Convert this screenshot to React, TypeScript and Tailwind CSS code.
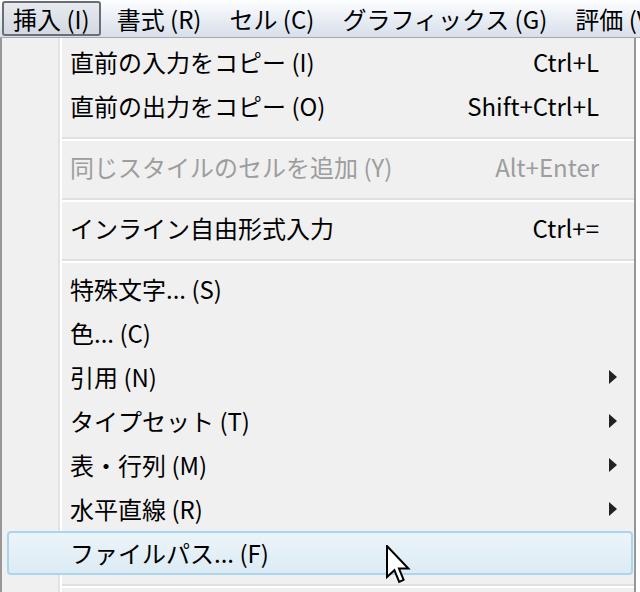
type Item =
  | { kind: "item"; label: string; shortcut?: string; sub?: boolean; disabled?: boolean; hot?: boolean }
  | { kind: "sep" };

const bar = ["挿入 (I)", "書式 (R)", "セル (C)", "グラフィックス (G)", "評価 (V)"];

const items: Item[] = [
  { kind: "item", label: "直前の入力をコピー (I)", shortcut: "Ctrl+L" },
  { kind: "item", label: "直前の出力をコピー (O)", shortcut: "Shift+Ctrl+L" },
  { kind: "sep" },
  { kind: "item", label: "同じスタイルのセルを追加 (Y)", shortcut: "Alt+Enter", disabled: true },
  { kind: "sep" },
  { kind: "item", label: "インライン自由形式入力", shortcut: "Ctrl+=" },
  { kind: "sep" },
  { kind: "item", label: "特殊文字... (S)" },
  { kind: "item", label: "色... (C)" },
  { kind: "item", label: "引用 (N)", sub: true },
  { kind: "item", label: "タイプセット (T)", sub: true },
  { kind: "item", label: "表・行列 (M)", sub: true },
  { kind: "item", label: "水平直線 (R)", sub: true },
  { kind: "item", label: "ファイルパス... (F)", hot: true },
  { kind: "sep" },
];

function Arrow() {
  return (
    <svg width="8" height="14" viewBox="0 0 8 14" className="ml-[10px]">
      <path d="M0 0 L8 7 L0 14 Z" fill="#222" />
    </svg>
  );
}

function Cursor() {
  return (
    <svg width="26" height="40" viewBox="0 0 13 20" className="absolute left-[386px] top-[545px]">
      <path
        d="M0.5 0.5 L0.5 16 L4.2 12.6 L6.6 18.4 L8.8 17.4 L6.5 11.8 L11.2 11.8 Z"
        fill="#fff"
        stroke="#000"
        strokeWidth="1"
        strokeLinejoin="miter"
      />
    </svg>
  );
}

export default function App() {
  return (
    <div
      className="relative w-[640px] h-[592px] overflow-hidden bg-white text-black text-[24px] leading-none"
      style={{ fontFamily: '"Noto Sans CJK JP", "Noto Sans", sans-serif' }}
    >
      {/* menu bar */}
      <div className="flex items-center h-[38px] border-b border-[#a3aab4] bg-[linear-gradient(to_bottom,#fdfeff,#e9eef5_50%,#d8dfe9)] pl-[2px] gap-[4px] whitespace-nowrap">
        {bar.map((b, i) => (
          <div
            key={b}
            className={
              i === 0
                ? "h-[35px] flex items-center px-[9px] rounded-[3px] border-2 border-[#6b6e73] bg-[linear-gradient(to_bottom,#e7eaef,#d3d9e1)]"
                : "h-[35px] flex items-center px-[12px]"
            }
          >
            {b}
          </div>
        ))}
      </div>

      {/* dropdown */}
      <div className="w-[636px] border-l-2 border-r-2 border-[#979797] pt-[2px] bg-[linear-gradient(to_right,#f0f0f0_56px,#e2e3e3_56px,#e2e3e3_58px,#ffffff_58px,#ffffff_60px,#f0f0f0_60px)]">
        {items.map((it, i) =>
          it.kind === "sep" ? (
            <div key={i} className="h-[17px] pt-[9px] pl-[60px]">
              <div className="h-[2px] bg-[#e0e0e0]" />
              <div className="h-[2px] bg-white" />
            </div>
          ) : (
            <div
              key={i}
              className={
                "flex items-center h-[44px] ml-[5px] mr-[1px] pl-[61px] border-2 rounded-[4px] " +
                (it.hot
                  ? "border-[#a9d6ee] bg-[linear-gradient(to_bottom,#ecf4f8,#dcebf4)]"
                  : "border-transparent") +
                (it.disabled ? " text-[#9d9d9d]" : "")
              }
            >
              <span className="flex-1">{it.label}</span>
              {it.shortcut && <span>{it.shortcut}</span>}
              <div className="w-[32px] flex items-center">{it.sub && <Arrow />}</div>
            </div>
          )
        )}
      </div>

      <Cursor />
    </div>
  );
}
